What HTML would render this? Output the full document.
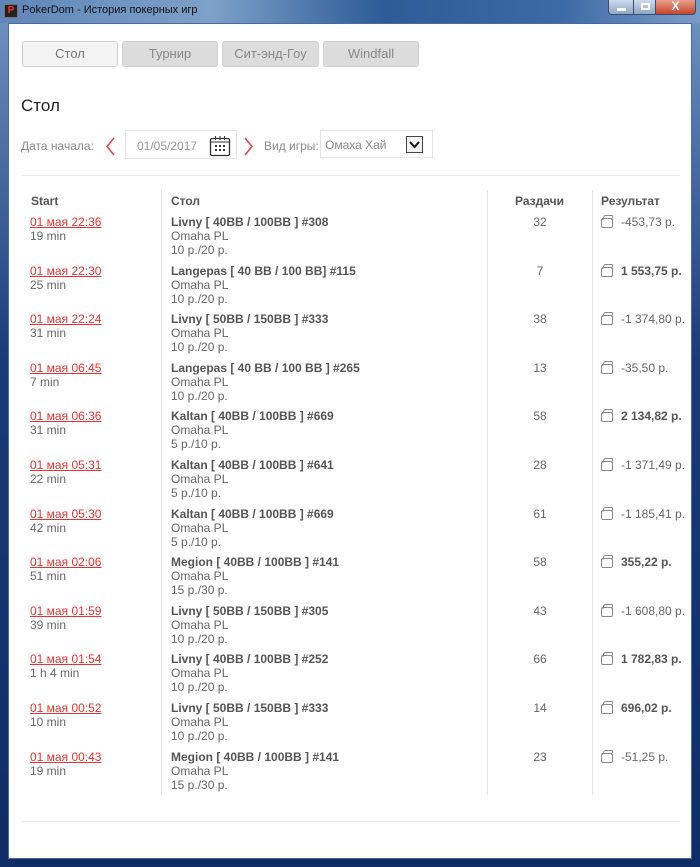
<!DOCTYPE html>
<html><head><meta charset="utf-8"><style>
*{margin:0;padding:0;box-sizing:border-box}
body{width:700px;height:867px;overflow:hidden;background:#1a3f7a;font-family:"Liberation Sans",Arial,sans-serif;position:relative}
.tb{position:absolute;left:0;top:0;width:700px;height:23px;background:linear-gradient(90deg,#5f86b8 0%,#7da0c8 30%,#2d5c97 55%,#3c6aa6 80%,#7c9cc6 100%)}
.frame{position:absolute;left:0;top:23px;width:700px;height:844px;background:linear-gradient(180deg,#6b8fbf,#1a3a78 40%,#0f2c66)}
.win{position:absolute;left:8px;top:23px;width:684px;height:836px;background:#fff;border:1px solid #4a6a99}
.ttl{position:absolute;left:22px;top:4px;font-size:11px;color:#111;font-family:"Liberation Sans",sans-serif}
.ico{position:absolute;left:4px;top:4px;width:14px;height:14px;background:#222;border:1px solid #777;color:#e33;font-size:10px;font-weight:bold;line-height:12px;text-align:center}
.btn{position:absolute;top:0;height:15px;border:1px solid #3a4e70;border-top:none}
.a{position:absolute;font-size:12px;color:#666;white-space:nowrap;line-height:14px}
.tab{position:absolute;top:41px;height:26px;border-radius:3px;background:#dcdcdc;border:1px solid #d0d0d0;color:#888;font-size:13px;text-align:center;line-height:24px}
.red{color:#e53333;text-decoration:underline}
.b{font-weight:bold;color:#555}
.vl{position:absolute;top:190px;height:605px;width:1px;background:#e4e4e4}
.w{position:absolute;width:12px;height:10px;border:1px solid #888;border-radius:2px}
.w:before{content:"";position:absolute;left:1px;top:-4px;width:8px;height:4px;border:1px solid #888;border-bottom:none;border-radius:2px 2px 0 0;transform:skewX(-15deg)}
</style></head><body>
<div class="tb"></div><div class="frame"></div>
<div class="ico">P</div><div class="ttl">PokerDom - История покерных игр</div>
<div class="btn" style="left:608px;width:26px;background:linear-gradient(#cdd9ea,#8fa6c6);border-radius:0 0 0 4px"><div style="position:absolute;left:8px;top:8px;width:9px;height:3px;background:#fff"></div></div>
<div class="btn" style="left:633px;width:23px;background:linear-gradient(#cdd9ea,#8fa6c6)"><div style="position:absolute;left:7px;top:3px;width:9px;height:7px;border:2px solid #fff"></div></div>
<div class="btn" style="left:655px;width:41px;background:linear-gradient(#e8a08c,#c7452c);border-radius:0 0 4px 0;color:#fff;font-weight:bold;font-size:12px;text-align:center;line-height:13px">X</div>
<div class="win"></div>
<div class="tab" style="left:22px;width:96px;background:#f3f3f3;color:#777">Стол</div>
<div class="tab" style="left:122px;width:96px">Турнир</div>
<div class="tab" style="left:222px;width:97px">Сит-энд-Гоу</div>
<div class="tab" style="left:323px;width:96px">Windfall</div>
<div class="a" style="left:21px;top:96px;font-size:17px;line-height:20px;color:#222">Стол</div>
<div class="a" style="left:21px;top:139px;color:#888">Дата начала:</div>
<svg style="position:absolute;left:104px;top:137px" width="12" height="20"><path d="M10 1 L3 9.5 L10 18" stroke="#e04a4a" stroke-width="1.6" fill="none"/></svg>
<div style="position:absolute;left:125px;top:130px;width:112px;height:29px;border:1px solid #e4e4e4"></div>
<div class="a" style="left:137px;top:139px;color:#999">01/05/2017</div>
<svg style="position:absolute;left:209px;top:135px" width="22" height="22"><rect x="1.5" y="3.5" width="19" height="17" rx="1.5" fill="none" stroke="#333" stroke-width="1.3"/><line x1="2" y1="7" x2="20" y2="7" stroke="#333"/><g fill="#333"><rect x="6" y="1" width="1" height="4"/><rect x="10.5" y="1" width="1" height="4"/><rect x="15" y="1" width="1" height="4"/><rect x="6" y="10" width="2" height="2"/><rect x="10" y="10" width="2" height="2"/><rect x="14" y="10" width="2" height="2"/><rect x="6" y="14" width="2" height="2"/><rect x="10" y="14" width="2" height="2"/><rect x="14" y="14" width="2" height="2"/></g></svg>
<svg style="position:absolute;left:243px;top:137px" width="12" height="20"><path d="M2 1 L9 9.5 L2 18" stroke="#e04a4a" stroke-width="1.6" fill="none"/></svg>
<div class="a" style="left:264px;top:139px;color:#888">Вид игры:</div>
<div style="position:absolute;left:320px;top:130px;width:113px;height:28px;border:1px solid #e4e4e4"></div>
<div class="a" style="left:325px;top:138px;color:#888">Омаха Хай</div>
<div style="position:absolute;left:406px;top:136px;width:17px;height:17px;border:1px solid #444;background:#f4f4f4"><svg width="15" height="15" style="position:absolute;left:0;top:0"><path d="M3 5 L7.5 10 L12 5" stroke="#111" stroke-width="2" fill="none"/></svg></div>
<div style="position:absolute;left:22px;top:175px;width:658px;height:1px;background:#ececec"></div>
<div style="position:absolute;left:22px;top:821px;width:658px;height:1px;background:#ececec"></div>
<div class="vl" style="left:161px"></div><div class="vl" style="left:487px"></div><div class="vl" style="left:592px"></div>
<div class="a b" style="left:31px;top:194px">Start</div>
<div class="a b" style="left:171px;top:194px">Стол</div>
<div class="a b" style="left:515px;top:194px">Раздачи</div>
<div class="a b" style="left:601px;top:194px">Результат</div>
<div id="rows"></div>
<script>
var d=[["01 мая 22:36","19 min","Livny [ 40BB / 100BB ] #308","10 р./20 р.","32","-453,73 р.",0],
["01 мая 22:30","25 min","Langepas [ 40 BB / 100 BB] #115","10 р./20 р.","7","1 553,75 р.",1],
["01 мая 22:24","31 min","Livny [ 50BB / 150BB ] #333","10 р./20 р.","38","-1 374,80 р.",0],
["01 мая 06:45","7 min","Langepas [ 40 BB / 100 BB ] #265","10 р./20 р.","13","-35,50 р.",0],
["01 мая 06:36","31 min","Kaltan [ 40BB / 100BB ] #669","5 р./10 р.","58","2 134,82 р.",1],
["01 мая 05:31","22 min","Kaltan [ 40BB / 100BB ] #641","5 р./10 р.","28","-1 371,49 р.",0],
["01 мая 05:30","42 min","Kaltan [ 40BB / 100BB ] #669","5 р./10 р.","61","-1 185,41 р.",0],
["01 мая 02:06","51 min","Megion [ 40BB / 100BB ] #141","15 р./30 р.","58","355,22 р.",1],
["01 мая 01:59","39 min","Livny [ 50BB / 150BB ] #305","10 р./20 р.","43","-1 608,80 р.",0],
["01 мая 01:54","1 h 4 min","Livny [ 40BB / 100BB ] #252","10 р./20 р.","66","1 782,83 р.",1],
["01 мая 00:52","10 min","Livny [ 50BB / 150BB ] #333","10 р./20 р.","14","696,02 р.",1],
["01 мая 00:43","19 min","Megion [ 40BB / 100BB ] #141","15 р./30 р.","23","-51,25 р.",0]];
var h="";d.forEach(function(r,i){var y=215+i*48.6;
h+='<div class="a red" style="left:30px;top:'+y+'px">'+r[0]+'</div>';
h+='<div class="a" style="left:30px;top:'+(y+14)+'px">'+r[1]+'</div>';
h+='<div class="a b" style="left:171px;top:'+y+'px">'+r[2]+'</div>';
h+='<div class="a" style="left:171px;top:'+(y+14)+'px">Omaha PL</div>';
h+='<div class="a" style="left:171px;top:'+(y+28)+'px">'+r[3]+'</div>';
h+='<div class="a" style="left:520px;width:40px;text-align:center;top:'+y+'px">'+r[4]+'</div>';
h+='<div class="w" style="left:601px;top:'+(y+3)+'px"></div>';
h+='<div class="a'+(r[6]?' b':'')+'" style="left:621px;top:'+y+'px">'+r[5]+'</div>';});
document.getElementById("rows").innerHTML=h;
</script>
</body></html>
